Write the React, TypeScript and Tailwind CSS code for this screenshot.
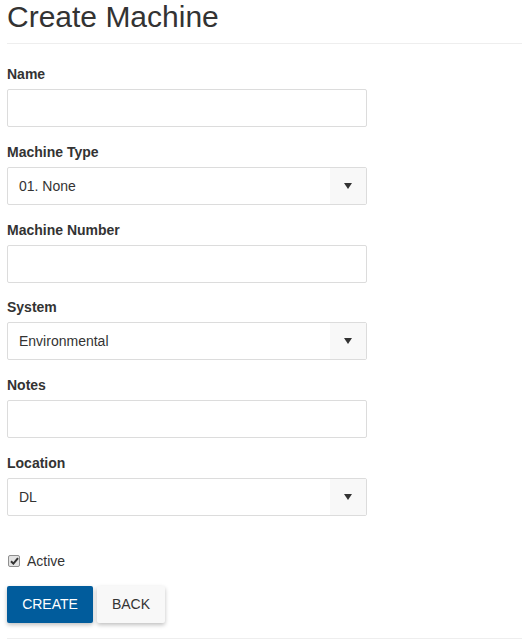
import React from "react";

function Caret() {
  return (
    <svg width="8" height="6" viewBox="0 0 8 6">
      <path d="M0 0 L8 0 L4 6 Z" fill="#333" />
    </svg>
  );
}

function Label({ children }: { children: React.ReactNode }) {
  return <label className="block text-[14px] leading-[20px] font-bold text-[#333] mb-[5px]">{children}</label>;
}

function TextInput() {
  return <div className="w-[360px] h-[38px] border border-[#dcdcdc] rounded-[2px] bg-white" />;
}

function Select({ value }: { value: string }) {
  return (
    <div className="w-[360px] h-[38px] border border-[#dcdcdc] rounded-[2px] bg-white flex items-stretch">
      <div className="flex-1 flex items-center pl-[11px] text-[14px] text-[#333]">{value}</div>
      <div className="w-[36px] bg-[#f8f8f8] flex items-center justify-center">
        <Caret />
      </div>
    </div>
  );
}

export default function App() {
  const font = { fontFamily: '"Liberation Sans", Arial, sans-serif' };
  return (
    <div className="bg-white min-h-[640px] pl-[7px]" style={font}>
      <h1 className="text-[30px] leading-[33px] font-normal text-[#333] m-0">Create Machine</h1>
      <div className="mt-[10px] border-t border-[#eeeeee] mb-[20px]" />
      <div className="mb-[15px]">
        <Label>Name</Label>
        <TextInput />
      </div>
      <div className="mb-[15px]">
        <Label>Machine Type</Label>
        <Select value="01. None" />
      </div>
      <div className="mb-[14px]">
        <Label>Machine Number</Label>
        <TextInput />
      </div>
      <div className="mb-[15px]">
        <Label>System</Label>
        <Select value="Environmental" />
      </div>
      <div className="mb-[15px]">
        <Label>Notes</Label>
        <TextInput />
      </div>
      <div>
        <Label>Location</Label>
        <Select value="DL" />
      </div>
      <div className="mt-[35px] flex items-center h-[20px] gap-[7px] pl-[1px]">
        <span className="w-[12px] h-[12px] border border-[#8f8f8f] rounded-[2px] bg-[#e3e3e3] flex items-center justify-center">
          <svg width="9" height="8" viewBox="0 0 9 8">
            <path d="M1 4.2 L3.4 6.6 L8 1.2" stroke="#333" strokeWidth="2" fill="none" />
          </svg>
        </span>
        <span className="text-[14px] text-[#333]">Active</span>
      </div>
      <div className="mt-[15px] flex gap-[4px]">
        <button className="h-[37px] w-[86px] bg-[#015c9c] text-white text-[14px] rounded-[2px] shadow-[0_2px_4px_rgba(0,0,0,0.25)]">CREATE</button>
        <button className="h-[37px] w-[68px] bg-[#f8f8f8] text-[#333] text-[14px] rounded-[2px] shadow-[0_2px_4px_rgba(0,0,0,0.25)]">BACK</button>
      </div>
      <div className="mt-[15px] border-t border-[#eeeeee]" />
    </div>
  );
}
